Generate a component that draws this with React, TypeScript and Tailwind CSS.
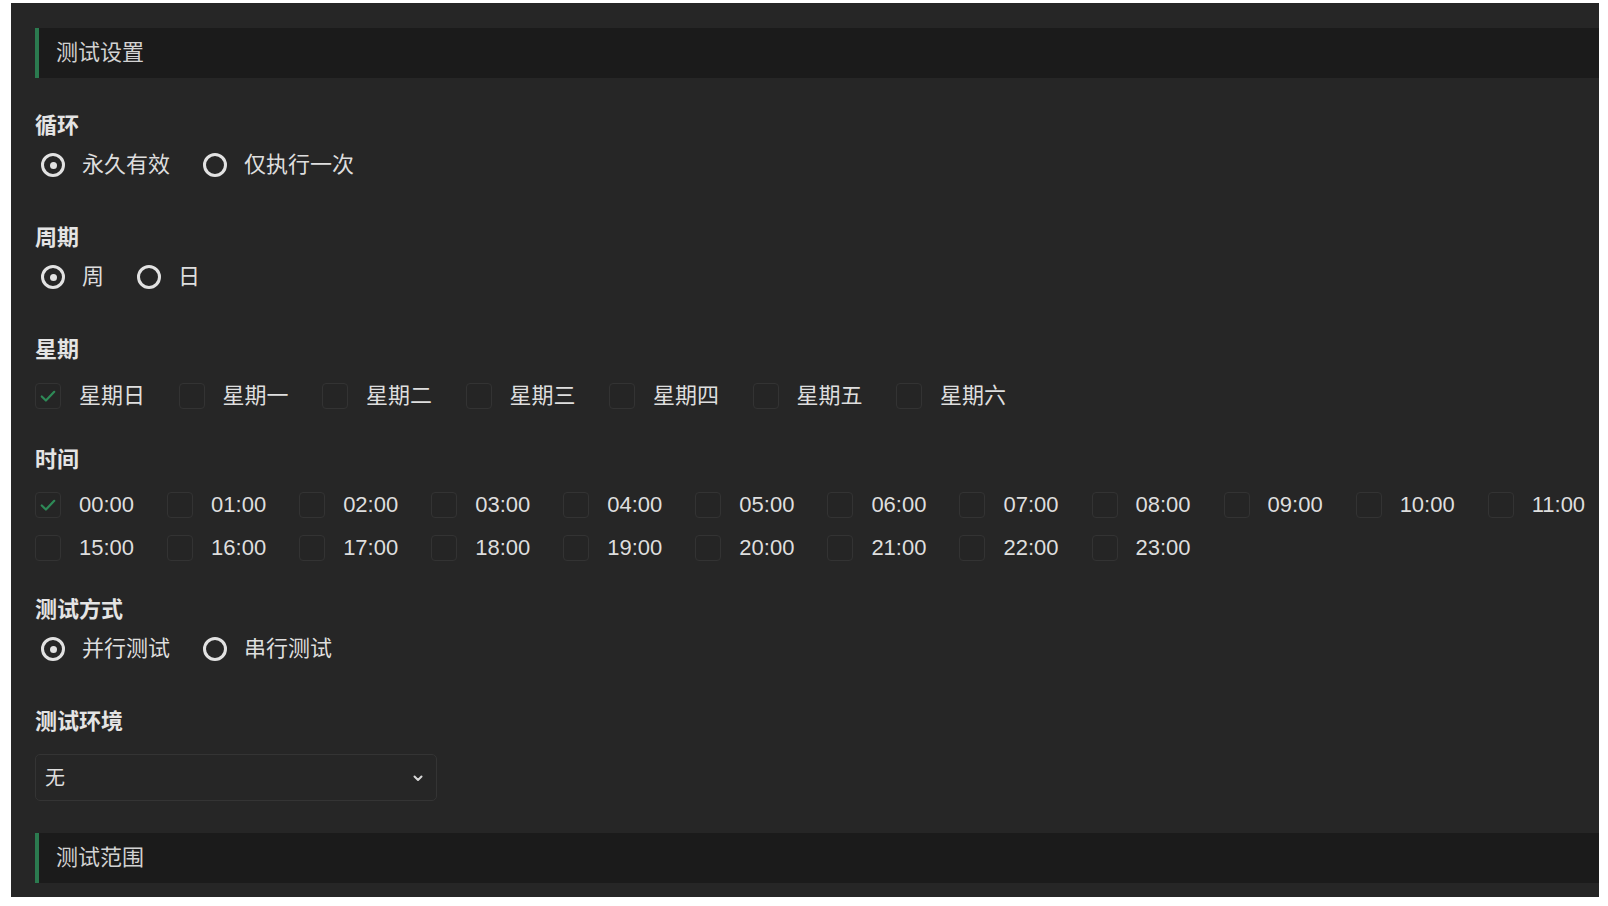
import { useState } from 'react';

const FONT = { fontFamily: '"Liberation Sans", "Noto Sans CJK SC", sans-serif' };

const WEEKDAYS = ['星期日', '星期一', '星期二', '星期三', '星期四', '星期五', '星期六'];
const HOURS = Array.from({ length: 24 }, (_, i) => `${String(i).padStart(2, '0')}:00`);

function SectionHeader({ title, className = '' }: { title: string; className?: string }) {
    return (
        <div className={`flex h-[50px] items-center border-l-4 border-[#2b7a4f] bg-[#1b1b1b] pl-[17px] ${className}`}>
            <span className="text-[22px] leading-none text-[#d2d2d2]">{title}</span>
        </div>
    );
}

function FieldLabel({ children, className = '' }: { children: string; className?: string }) {
    return <div className={`h-[30px] text-[22px] font-bold leading-[30px] text-[#e4e4e4] ${className}`}>{children}</div>;
}

function RadioGroup({ options, value, onChange, className = '' }: { options: string[]; value: string; onChange: (v: string) => void; className?: string }) {
    return (
        <div className={`flex h-[30px] items-center gap-[33px] pl-[6px] ${className}`}>
            {options.map((opt) => (
                <button key={opt} type="button" onClick={() => onChange(opt)} className="flex items-center gap-[17px]">
                    <span className="flex h-[24px] w-[24px] items-center justify-center rounded-full border-[3px] border-[#e2e2e2]">
                        {value === opt ? <span className="h-[7px] w-[7px] rounded-full bg-[#e2e2e2]" /> : null}
                    </span>
                    <span className="text-[22px] leading-none text-[#dedede]">{opt}</span>
                </button>
            ))}
        </div>
    );
}

function CheckItem({ label, checked, onToggle }: { label: string; checked: boolean; onToggle: () => void }) {
    return (
        <button type="button" onClick={onToggle} className="flex shrink-0 items-center gap-[18px] whitespace-nowrap">
            <span className="flex h-[26px] w-[26px] items-center justify-center rounded-[4px] border border-[#333333] bg-[#252525]">
                {checked ? (
                    <svg viewBox="0 0 24 24" className="h-[20px] w-[20px]" fill="none" stroke="#2e8a57" strokeWidth="2.6" strokeLinecap="round" strokeLinejoin="round">
                        <path d="M4.5 12.5l5 5L19.5 7" />
                    </svg>
                ) : null}
            </span>
            <span className="text-[22px] leading-none text-[#dedede]">{label}</span>
        </button>
    );
}

export default function App() {
    const [loop, setLoop] = useState('永久有效');
    const [period, setPeriod] = useState('周');
    const [mode, setMode] = useState('并行测试');
    const [days, setDays] = useState<string[]>(['星期日']);
    const [hours, setHours] = useState<string[]>(['00:00']);

    const toggle = (list: string[], set: (v: string[]) => void, item: string) =>
        set(list.includes(item) ? list.filter((x) => x !== item) : [...list, item]);

    // 12:00-14:00 sit past the panel's right edge in the original, so row one stops at 11:00
    const rows = [HOURS.slice(0, 12), HOURS.slice(15)];

    return (
        <div className="h-[906px] w-full bg-white pb-[9px] pl-[11px] pr-[9px] pt-[3px]" style={FONT}>
            <div className="h-full overflow-hidden bg-[#262626] pl-[24px] pt-[25px]">
                <SectionHeader title="测试设置" />

                <FieldLabel className="mt-[33px]">循环</FieldLabel>
                <RadioGroup className="mt-[9px]" options={['永久有效', '仅执行一次']} value={loop} onChange={setLoop} />

                <FieldLabel className="mt-[43px]">周期</FieldLabel>
                <RadioGroup className="mt-[9px]" options={['周', '日']} value={period} onChange={setPeriod} />

                <FieldLabel className="mt-[43px]">星期</FieldLabel>
                <div className="mt-[16px] flex h-[30px] items-center gap-[33.5px]">
                    {WEEKDAYS.map((d) => (
                        <CheckItem key={d} label={d} checked={days.includes(d)} onToggle={() => toggle(days, setDays, d)} />
                    ))}
                </div>

                <FieldLabel className="mt-[34px]">时间</FieldLabel>
                <div className="mt-[15px] flex flex-col gap-[13px]">
                    {rows.map((row, i) => (
                        <div key={i} className="flex h-[30px] items-center gap-[33px]">
                            {row.map((h) => (
                                <CheckItem key={h} label={h} checked={hours.includes(h)} onToggle={() => toggle(hours, setHours, h)} />
                            ))}
                        </div>
                    ))}
                </div>

                <FieldLabel className="mt-[32px]">测试方式</FieldLabel>
                <RadioGroup className="mt-[9px]" options={['并行测试', '串行测试']} value={mode} onChange={setMode} />

                <FieldLabel className="mt-[43px]">测试环境</FieldLabel>
                <div className="mt-[17px] flex h-[47px] w-[402px] items-center justify-between rounded-[5px] border border-[#343434] bg-[#262626] pl-[9px] pr-[12px]">
                    <span className="text-[20px] leading-none text-[#dedede]">无</span>
                    <svg viewBox="0 0 12 12" className="h-[12px] w-[12px]" fill="none" stroke="#d8d8d8" strokeWidth="2" strokeLinecap="round" strokeLinejoin="round">
                        <path d="M2.5 4.5L6 8l3.5-3.5" />
                    </svg>
                </div>

                <SectionHeader title="测试范围" className="mt-[32px]" />
            </div>
        </div>
    );
}
